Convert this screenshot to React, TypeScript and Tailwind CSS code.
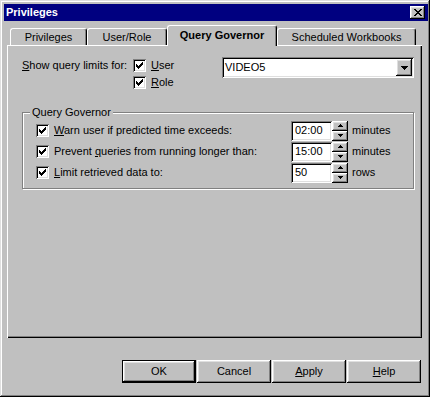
import React from "react";

const RAISED =
  "shadow-[inset_-1px_-1px_#000,inset_1px_1px_#fff,inset_-2px_-2px_#808080,inset_2px_2px_#dfdfdf]";
const SUNKEN =
  "shadow-[inset_1px_1px_#808080,inset_-1px_-1px_#fff,inset_2px_2px_#000,inset_-2px_-2px_#dfdfdf]";

function CheckBox() {
  const cols: [number, number][] = [
    [3, 5],
    [4, 6],
    [5, 7],
    [6, 6],
    [7, 5],
    [8, 4],
    [9, 3],
  ];
  return (
    <div className={`w-[13px] h-[13px] shrink-0 bg-white ${SUNKEN}`}>
      <svg width="13" height="13" viewBox="0 0 13 13" className="block" shapeRendering="crispEdges">
        {cols.map(([x, y]) => (
          <rect key={x} x={x} y={y} width="1" height="3" fill="#000" />
        ))}
      </svg>
    </div>
  );
}

function CloseBtn() {
  const px: [number, number][] = [
    [0, 0], [1, 0], [6, 0], [7, 0],
    [1, 1], [2, 1], [5, 1], [6, 1],
    [2, 2], [3, 2], [4, 2], [5, 2],
    [3, 3], [4, 3],
    [2, 4], [3, 4], [4, 4], [5, 4],
    [1, 5], [2, 5], [5, 5], [6, 5],
    [0, 6], [1, 6], [6, 6], [7, 6],
  ];
  return (
    <div className={`w-[15px] h-[13px] bg-[#c0c0c0] ${RAISED} flex items-center justify-center`}>
      <svg width="8" height="7" viewBox="0 0 8 7" className="block" shapeRendering="crispEdges">
        {px.map(([x, y], i) => (
          <rect key={i} x={x} y={y} width="1" height="1" fill="#000" />
        ))}
      </svg>
    </div>
  );
}

function Spinner() {
  return (
    <div className="w-[16px] h-[20px] flex flex-col">
      <div className={`h-[10px] bg-[#c0c0c0] ${RAISED} flex items-center justify-center`}>
        <svg width="5" height="3" viewBox="0 0 5 3" className="block" shapeRendering="crispEdges">
          <rect x="2" y="0" width="1" height="1" fill="#000" />
          <rect x="1" y="1" width="3" height="1" fill="#000" />
          <rect x="0" y="2" width="5" height="1" fill="#000" />
        </svg>
      </div>
      <div className={`h-[10px] bg-[#c0c0c0] ${RAISED} flex items-center justify-center`}>
        <svg width="5" height="3" viewBox="0 0 5 3" className="block" shapeRendering="crispEdges">
          <rect x="0" y="0" width="5" height="1" fill="#000" />
          <rect x="1" y="1" width="3" height="1" fill="#000" />
          <rect x="2" y="2" width="1" height="1" fill="#000" />
        </svg>
      </div>
    </div>
  );
}

function Row({ label, value, unit }: { label: React.ReactNode; value: string; unit: string }) {
  return (
    <div className="flex items-center h-[21px]">
      <CheckBox />
      <div className="ml-[5px] w-[237px] whitespace-nowrap">{label}</div>
      <div className={`w-[41px] h-[20px] bg-white ${SUNKEN} flex items-center pl-[4px]`}>{value}</div>
      <Spinner />
      <div className="ml-[4px]">{unit}</div>
    </div>
  );
}

function Tab({ label, w }: { label: string; w: string }) {
  return (
    <div
      className={`${w} h-[17px] border-t border-l border-r border-t-white border-l-white border-r-black rounded-t-[3px] shadow-[inset_-1px_0_#808080] flex items-center justify-center`}
    >
      {label}
    </div>
  );
}

function Btn({ children, def }: { children: React.ReactNode; def?: boolean }) {
  return (
    <div
      className={`w-[74px] h-[23px] bg-[#c0c0c0] ${RAISED} flex items-center justify-center ${
        def ? "border border-black" : ""
      }`}
    >
      {children}
    </div>
  );
}

export default function App() {
  return (
    <div className="font-['Liberation_Sans',Arial,sans-serif] w-[430px] h-[397px] bg-[#c0c0c0] text-black text-[11px] leading-[13px] pt-[4px] pl-[4px] pr-[2px] shadow-[inset_-1px_-1px_#000,inset_1px_1px_#dfdfdf,inset_-2px_-2px_#808080,inset_2px_2px_#fff] flex flex-col">
      {/* Title bar */}
      <div className="h-[17px] bg-[#000080] flex items-center justify-between pl-[2px] pr-[3px]">
        <span className="text-white font-bold">Privileges</span>
        <CloseBtn />
      </div>

      {/* Tabs + panel */}
      <div className="mt-[4px] ml-[3px] mr-[6px] flex flex-col">
        <div className="flex items-end h-[20px] pl-[3px]">
          <Tab w="w-[77px]" label="Privileges" />
          <Tab w="w-[80px]" label="User/Role" />
          <div className="relative z-10 -mb-px w-[110px] h-[21px] bg-[#c0c0c0] border-t border-l border-r border-t-white border-l-white border-r-black rounded-t-[3px] shadow-[inset_-1px_0_#808080] flex items-center justify-center font-bold pb-[2px]">
            Query Governor
          </div>
          <Tab w="w-[139px]" label="Scheduled Workbooks" />
        </div>

        <div className="h-[293px] bg-[#c0c0c0] shadow-[inset_1px_1px_#fff,inset_-1px_-1px_#000,inset_-2px_-2px_#808080] pt-[12px] pl-[15px] pr-[8px]">
          <div className="flex items-start">
            <div className="w-[111px] mt-[2px] whitespace-nowrap">
              <span className="underline">S</span>how query limits for:
            </div>
            <div className="flex flex-col gap-[4px] mt-[2px]">
              <div className="flex items-center gap-[5px] h-[13px]">
                <CheckBox />
                <span>
                  <span className="underline">U</span>ser
                </span>
              </div>
              <div className="flex items-center gap-[5px] h-[13px]">
                <CheckBox />
                <span>
                  <span className="underline">R</span>ole
                </span>
              </div>
            </div>
            <div className={`ml-auto w-[192px] h-[21px] bg-white ${SUNKEN} flex items-center justify-between pl-[3px] pr-[2px]`}>
              <span>VIDEO5</span>
              <div className={`w-[16px] h-[17px] bg-[#c0c0c0] ${RAISED} flex items-center justify-center`}>
                <svg width="7" height="4" viewBox="0 0 7 4" className="block" shapeRendering="crispEdges">
                  <rect x="0" y="0" width="7" height="1" fill="#000" />
                  <rect x="1" y="1" width="5" height="1" fill="#000" />
                  <rect x="2" y="2" width="3" height="1" fill="#000" />
                  <rect x="3" y="3" width="1" height="1" fill="#000" />
                </svg>
              </div>
            </div>
          </div>

          <fieldset className="mt-[17px] border border-[#808080] shadow-[inset_1px_1px_#fff,1px_1px_#fff] p-0 m-0 min-w-0">
            <legend className="ml-[7px] px-[2px] bg-[#c0c0c0]">Query Governor</legend>
            <div className="pl-[13px] pt-[1px] pb-[5px]">
              <Row
                label={
                  <>
                    <span className="underline">W</span>arn user if predicted time exceeds:
                  </>
                }
                value="02:00"
                unit="minutes"
              />
              <Row
                label={
                  <>
                    Prevent <span className="underline">q</span>ueries from running longer than:
                  </>
                }
                value="15:00"
                unit="minutes"
              />
              <Row
                label={
                  <>
                    <span className="underline">L</span>imit retrieved data to:
                  </>
                }
                value="50"
                unit="rows"
              />
            </div>
          </fieldset>
        </div>
      </div>

      {/* Buttons */}
      <div className="mt-[22px] flex justify-end gap-[1px] pr-[7px]">
        <Btn def>OK</Btn>
        <Btn>Cancel</Btn>
        <Btn>
          <span>
            <span className="underline">A</span>pply
          </span>
        </Btn>
        <Btn>
          <span>
            <span className="underline">H</span>elp
          </span>
        </Btn>
      </div>
    </div>
  );
}
